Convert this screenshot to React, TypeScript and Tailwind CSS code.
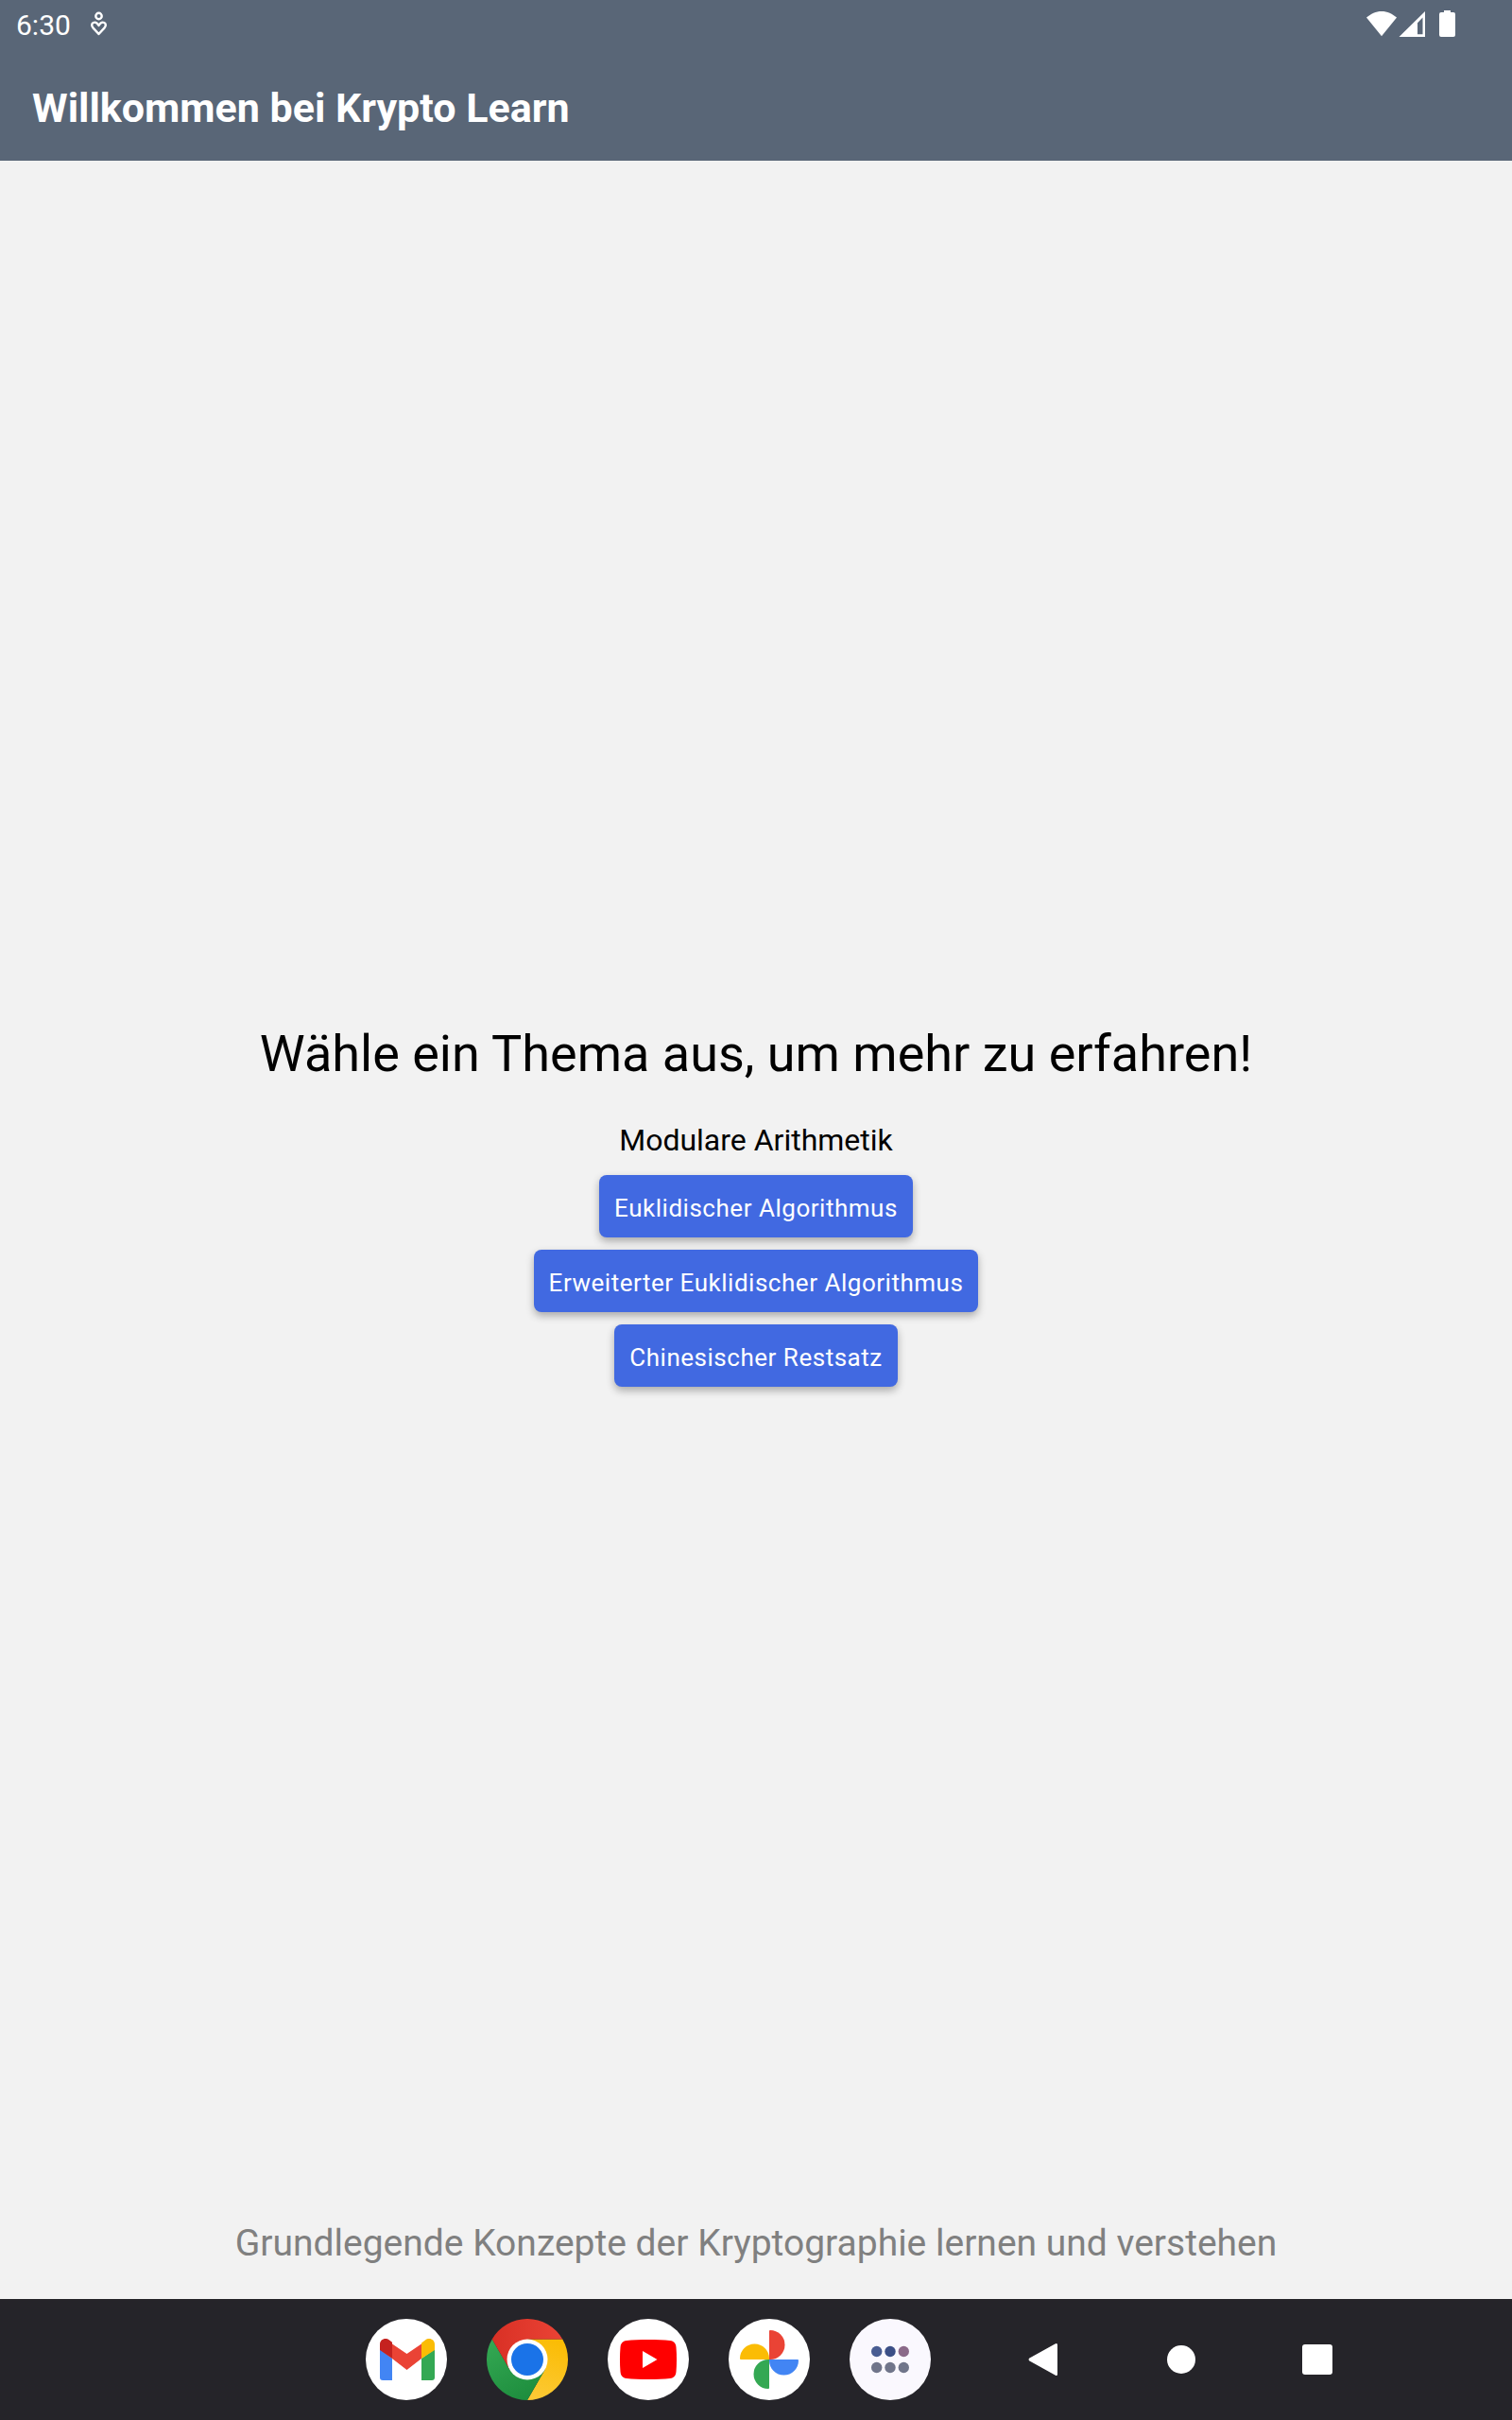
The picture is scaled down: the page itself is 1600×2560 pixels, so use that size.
const topics = [
  "Euklidischer Algorithmus",
  "Erweiterter Euklidischer Algorithmus",
  "Chinesischer Restsatz",
];

function StatusBar() {
  return (
    <div className="flex h-13 items-center justify-between pr-15 pl-[17px] text-white">
      <div className="flex items-center gap-[19px]">
        <time className="pt-px text-[30px] leading-8">6:30</time>
        <svg className="h-8 w-5" viewBox="0 0 20 32" fill="none" stroke="currentColor" aria-hidden="true">
          <circle cx="10.500" cy="7" r="3.200" strokeWidth="2.400" />
          <path
            d="M10.500 26 4.600 19.600C2.500 17.300 2.900 14.900 4.700 14c2-.9 4.300.3 5.800 3 1.500-2.700 3.800-3.900 5.800-3 1.800.9 2.200 3.300.1 5.600Z"
            strokeWidth="2.400"
            strokeLinejoin="round"
          />
        </svg>
      </div>
      <div className="flex items-center" aria-label="WLAN, Mobilfunk, Akku">
        <svg className="h-8 w-[94px]" viewBox="0 0 94 32" fill="currentColor" aria-hidden="true">
          <path d="M0 8.600C4.500 4.600 10 2 16 2s11.500 2.600 16 6.600L16 28.300Z" />
          <path fillRule="evenodd" d="M62 2v27H34.500ZM59.500 8.500 54 14.200V26.200h5.500Z" />
          <path d="M82 1h7v2h3q2 0 2 2v22q0 2-2 2H79q-2 0-2-2V5q0-2 2-2h3Z" />
        </svg>
      </div>
    </div>
  );
}

function GmailIcon() {
  return (
    <svg className="size-[86px]" viewBox="0 0 86 86" aria-hidden="true">
      <circle cx="43" cy="43" r="43" fill="#fff" />
      <path d="M15 32v30q0 3 3 3h10V42Z" fill="#4285f4" />
      <path d="M59 42v23h11q3 0 3-3V32Z" fill="#34a853" />
      <path d="M28 26.500 43.500 37 59 26.500V42L43.500 54 28 42Z" fill="#ea4335" />
      <path d="M15 33v-6c0-5.600 6-7.800 10-4.600l3 2.300V42Z" fill="#c5221f" />
      <path d="M73 33v-6c0-5.600-6-7.800-10-4.600l-4 3V42Z" fill="#fbbc04" />
    </svg>
  );
}

function ChromeIcon() {
  return (
    <svg className="size-[86px]" viewBox="0 0 86 86" aria-hidden="true">
      <defs>
        <linearGradient id="chrome-red" x1="0" x2="1">
          <stop stopColor="#d93025" />
          <stop offset="1" stopColor="#ea4335" />
        </linearGradient>
        <linearGradient id="chrome-green" x1="0.6" y1="1" x2="0.1" y2="0">
          <stop stopColor="#1e8e3e" />
          <stop offset="1" stopColor="#34a853" />
        </linearGradient>
        <linearGradient id="chrome-yellow" x1="0.4" y1="1" x2="0.6" y2="0">
          <stop stopColor="#fcc934" />
          <stop offset="1" stopColor="#fbbc04" />
        </linearGradient>
      </defs>
      <path d="M43 21.500H80.240A43 43 0 0 1 43 86L61.600 53.750 43 43Z" fill="url(#chrome-yellow)" />
      <path d="M5.760 21.500A43 43 0 0 0 43 86L61.600 53.750 43 43 24.400 53.750Z" fill="url(#chrome-green)" />
      <path d="M43 43 24.400 53.750 5.760 21.500A43 43 0 0 1 80.240 21.500H43Z" fill="url(#chrome-red)" />
      <circle cx="43" cy="43" r="21.500" fill="#fff" />
      <circle cx="43" cy="43" r="17" fill="#1a73e8" />
    </svg>
  );
}

function YouTubeIcon() {
  return (
    <svg className="size-[86px]" viewBox="0 0 86 86" aria-hidden="true">
      <circle cx="43" cy="43" r="43" fill="#fff" />
      <path
        d="M20 23C32 21.700 54 21.700 66 23c4.500.5 6 3 6.500 7 .7 8 .7 18 0 26-.5 4-2 6.500-6.500 7-12 1.300-34 1.300-46 0-4.500-.5-6-3-6.500-7-.7-8-.7-18 0-26 .5-4 2-6.500 6.500-7Z"
        fill="#f00"
      />
      <path d="M37 34v18l15.500-9Z" fill="#fff" />
    </svg>
  );
}

function PhotosIcon() {
  return (
    <svg className="size-[86px]" viewBox="0 0 86 86" aria-hidden="true">
      <circle cx="43" cy="43" r="43" fill="#fff" />
      <path d="M43 43V13q0-1 1-1a15.500 15.500 0 0 1 0 31Z" fill="#ea4335" />
      <path d="M43 43H73q1 0 1 1a15.500 15.500 0 0 1-31 0Z" fill="#4285f4" />
      <path d="M43 43V73q0 1-1 1a15.500 15.500 0 0 1 0-31Z" fill="#34a853" />
      <path d="M43 43H13q-1 0-1-1a15.500 15.500 0 0 1 31 0Z" fill="#fbbc04" />
    </svg>
  );
}

function AllAppsIcon() {
  return (
    <svg className="size-[86px]" viewBox="0 0 86 86" aria-hidden="true">
      <circle cx="43" cy="43" r="43" fill="#faf8fe" />
      <circle cx="28.700" cy="34.500" r="5.700" fill="#495d92" />
      <circle cx="43" cy="34.500" r="5.700" fill="#3b4f86" />
      <circle cx="57.300" cy="34.500" r="5.700" fill="#8b6a89" />
      <circle cx="28.700" cy="51.500" r="5.700" fill="#70758a" />
      <circle cx="43" cy="51.500" r="5.700" fill="#70758a" />
      <circle cx="57.300" cy="51.500" r="5.700" fill="#70758a" />
    </svg>
  );
}

const apps = [
  { label: "Gmail", Icon: GmailIcon },
  { label: "Chrome", Icon: ChromeIcon },
  { label: "YouTube", Icon: YouTubeIcon },
  { label: "Fotos", Icon: PhotosIcon },
  { label: "Alle Apps", Icon: AllAppsIcon },
];

function NavButton({ label, children }: { label: string; children: React.ReactNode }) {
  return (
    <button type="button" aria-label={label} className="flex h-32 w-36 items-center justify-center">
      <svg className="size-9" viewBox="0 0 36 36" fill="#fff" aria-hidden="true">
        {children}
      </svg>
    </button>
  );
}

function Taskbar() {
  return (
    <nav className="flex h-32 items-center justify-end gap-[49px] bg-[#252429] pr-[134px]">
      <div className="flex gap-[42px]">
        {apps.map(({ label, Icon }) => (
          <button key={label} type="button" aria-label={label}>
            <Icon />
          </button>
        ))}
      </div>
      <div className="flex">
        <NavButton label="Zurück">
          <path d="M1 16.800 28.500 1.400Q31 0 31 2.500V33.500Q31 36 28.500 34.600L1 19.200Q0 18 1 16.800Z" />
        </NavButton>
        <NavButton label="Startbildschirm">
          <circle cx="18" cy="18" r="15" />
        </NavButton>
        <NavButton label="Übersicht">
          <rect x="2" y="2" width="32" height="32" rx="3" />
        </NavButton>
      </div>
    </nav>
  );
}

export default function App() {
  return (
    <div className="flex min-h-screen flex-col bg-[#f2f2f2] font-['Roboto',sans-serif]">
      <header className="bg-[#596677]">
        <StatusBar />
        <h1 className="px-[34px] pt-[35px] pb-[29px] text-[43px] leading-[54px] font-bold text-white">
          Willkommen bei Krypto Learn
        </h1>
      </header>

      <main className="flex flex-1 flex-col items-center justify-center pt-7 text-black">
        <h2 className="text-[54px] leading-[68px]">Wähle ein Thema aus, um mehr zu erfahren!</h2>
        <h3 className="mt-[38px] text-[32px] leading-[38px]">Modulare Arithmetik</h3>
        <div className="mt-[18px] flex flex-col items-center gap-[13px]">
          {topics.map((topic) => (
            <button
              key={topic}
              type="button"
              className="rounded-lg bg-[#4169e1] px-4 pt-5 pb-4 text-[26px] leading-[30px] tracking-[0.02em] text-white shadow-[0_4px_8px_rgba(0,0,0,0.3)]"
            >
              {topic}
            </button>
          ))}
        </div>
      </main>

      <footer className="px-8 pb-[35px] text-center text-[39px] leading-[47px] text-[#808080]">
        Grundlegende Konzepte der Kryptographie lernen und verstehen
      </footer>

      <Taskbar />
    </div>
  );
}
